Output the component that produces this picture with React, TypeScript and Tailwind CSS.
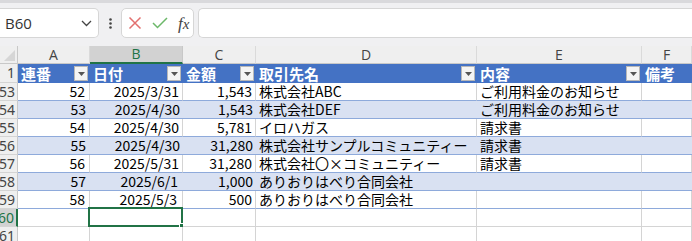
import React from 'react';

const cols = ['A', 'B', 'C', 'D', 'E', 'F'];

type Row = {
  n: string;
  no: string;
  date: string;
  amt: string;
  name: string;
  note: string;
  datePad?: boolean;
};

const rows: Row[] = [
  { n: '53', no: '52', date: '2025/3/31', amt: '1,543', name: '株式会社ABC', note: 'ご利用料金のお知らせ' },
  { n: '54', no: '53', date: '2025/4/30', amt: '1,543', name: '株式会社DEF', note: 'ご利用料金のお知らせ' },
  { n: '55', no: '54', date: '2025/4/30', amt: '5,781', name: 'イロハガス', note: '請求書' },
  { n: '56', no: '55', date: '2025/4/30', amt: '31,280', name: '株式会社サンプルコミュニティー', note: '請求書' },
  { n: '57', no: '56', date: '2025/5/31', amt: '31,280', name: '株式会社〇×コミュニティー', note: '請求書' },
  { n: '58', no: '57', date: '2025/6/1', amt: '1,000', name: 'ありおりはべり合同会社', note: '', datePad: true },
  { n: '59', no: '58', date: '2025/5/3', amt: '500', name: 'ありおりはべり合同会社', note: '', datePad: true },
];

const grid = 'grid grid-cols-[18px_72px_93px_73px_221px_165px_50px]';
const cellFont = "font-['Noto_Sans_CJK_JP',sans-serif]";

function RowHead({ n, active }: { n: string; active?: boolean }) {
  return (
    <div
      className={`flex justify-end overflow-hidden pr-[2px] text-[14px] leading-[17px] font-['Noto_Sans','Noto_Sans_CJK_JP',sans-serif] ${
        active
          ? 'bg-[#d2d2d2] text-[#217346] border-r-2 border-r-[#217346]'
          : 'bg-[#efefef] text-[#444] border-r border-r-[#c8c8c8]'
      } border-b border-b-[#d4d4d4]`}
    >
      <span className="whitespace-nowrap">{n}</span>
    </div>
  );
}

function FilterButton() {
  return (
    <div className="mr-[2px] flex h-[15px] w-[14px] shrink-0 items-center justify-center border border-[#b8b8b8] bg-[#f4f4f4]">
      <svg width="7" height="4" viewBox="0 0 7 4">
        <path d="M0 0h7L3.5 4z" fill="#555" />
      </svg>
    </div>
  );
}

function HeadCell({ label, filter = true }: { label: string; filter?: boolean }) {
  return (
    <div className="flex items-center justify-between bg-[#4472c4] pl-[3px]">
      <span className={`text-[15px] font-bold text-white leading-[19px] ${cellFont}`}>{label}</span>
      {filter && <FilterButton />}
    </div>
  );
}

export default function App() {
  return (
    <div className="h-[241px] w-[692px] overflow-hidden bg-white">
      {/* formula bar */}
      <div className="h-[46px] border-t-[3px] border-t-[#d9d9dc] bg-[#f0f0f2]">
        <div className="flex h-[43px] items-start pt-[5px]">
          <div className="flex h-[30px] w-[99px] items-center justify-between rounded-r-[5px] border border-l-0 border-[#d6d6d6] bg-white pl-[5px] pr-[6px]">
            <span className="font-['Open_Sans',sans-serif] text-[15px] text-[#333]">B60</span>
            <svg width="11" height="7" viewBox="0 0 11 7">
              <path d="M1 1l4.5 4.5L10 1" fill="none" stroke="#444" strokeWidth="1.3" />
            </svg>
          </div>
          <div className="flex h-[30px] w-[22px] items-center justify-center">
            <svg width="3" height="11" viewBox="0 0 3 11">
              <circle cx="1.5" cy="1.5" r="1.3" fill="#444" />
              <circle cx="1.5" cy="5.5" r="1.3" fill="#444" />
              <circle cx="1.5" cy="9.5" r="1.3" fill="#444" />
            </svg>
          </div>
          <div className="flex h-[30px] w-[73px] items-center gap-[10px] rounded-[5px] border border-[#d6d6d6] bg-white pl-[6px]">
            <svg width="14" height="14" viewBox="0 0 14 14">
              <path d="M1.5 1.5l11 11M12.5 1.5l-11 11" stroke="#e2706f" strokeWidth="1.5" />
            </svg>
            <svg width="16" height="12" viewBox="0 0 16 12">
              <path d="M1 6l4.5 4.5L15 1" fill="none" stroke="#6cb86a" strokeWidth="1.5" />
            </svg>
            <span className="font-['Liberation_Serif',serif] text-[17px] italic text-[#444] leading-none">
              f<span className="text-[15px]">x</span>
            </span>
          </div>
          <div className="ml-[4px] h-[30px] flex-1 rounded-l-[5px] border border-r-0 border-[#d6d6d6] bg-white" />
        </div>
      </div>

      {/* column letters */}
      <div className={`${grid} h-[18px] bg-[#efefef] font-['Open_Sans',sans-serif] text-[14px] text-[#444]`}>
        <div className="relative border-r border-b border-[#c8c8c8]">
          <svg className="absolute bottom-[2px] right-[2px]" width="11" height="11" viewBox="0 0 11 11">
            <path d="M11 0v11H0z" fill="#d6d6d6" />
          </svg>
        </div>
        {cols.map((c) => (
          <div
            key={c}
            className={`flex items-center justify-center leading-[16px] ${
              c === 'B'
                ? 'bg-[#d2d2d2] text-[#217346] border-b-2 border-b-[#217346] border-r border-r-[#c8c8c8]'
                : 'border-b border-b-[#c8c8c8] border-r border-r-[#dadada]'
            }`}
          >
            {c}
          </div>
        ))}
      </div>

      {/* table header */}
      <div className={`${grid} h-[19px] border-b border-b-[#8eaadb]`}>
        <RowHead n="1" />
        <HeadCell label="連番" />
        <HeadCell label="日付" />
        <HeadCell label="金額" />
        <HeadCell label="取引先名" />
        <HeadCell label="内容" />
        <HeadCell label="備考" filter={false} />
      </div>

      {/* data */}
      {rows.map((r, i) => {
        const band = i % 2 === 1;
        const cell = `border-b border-b-[#8eaadb] ${
          band ? 'bg-[#d9e1f2]' : 'bg-white border-r border-r-[#d4d4d4]'
        }`;
        return (
          <div
            key={r.n}
            className={`${grid} h-[18px] text-[14px] leading-[17px] text-black ${cellFont}`}
          >
            <RowHead n={r.n} />
            <div className={`${cell} pr-[4px] text-right`}>{r.no}</div>
            <div className={`${cell} text-right ${r.datePad ? 'pr-[5px]' : 'pr-[3px]'}`}>{r.date}</div>
            <div className={`${cell} pr-[3px] text-right`}>{r.amt}</div>
            <div className={`${cell} pl-[3px] whitespace-nowrap`}>{r.name}</div>
            <div className={`${cell} pl-[3px] whitespace-nowrap`}>{r.note}</div>
            <div className={cell} />
          </div>
        );
      })}

      {/* empty rows */}
      {['60', '61'].map((n) => (
        <div key={n} className={`${grid} h-[18px]`}>
          <RowHead n={n} active={n === '60'} />
          {cols.map((c) => (
            <div key={c} className="relative border-r border-b border-[#d4d4d4] bg-white">
              {n === '60' && c === 'B' && (
                <div className="absolute -left-[2px] -top-[2px] -right-[1px] -bottom-[1px] border-2 border-[#217346]">
                  <div className="absolute -bottom-[4px] -right-[4px] h-[6px] w-[6px] border border-white bg-[#217346]" />
                </div>
              )}
            </div>
          ))}
        </div>
      ))}
    </div>
  );
}
